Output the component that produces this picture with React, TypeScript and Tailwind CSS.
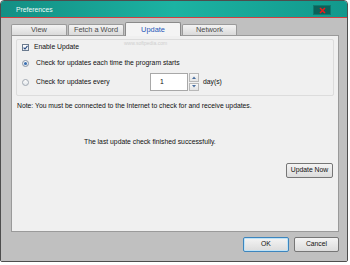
import React from "react";

const font = { fontFamily: '"Liberation Sans", Arial, sans-serif' };

function Tab({ label, selected, w }: { label: string; selected?: boolean; w: string }) {
  if (selected) {
    return (
      <div
        className={`${w} h-[14px] -mb-px z-10 flex items-center justify-center border border-b-0 border-[#8a8a8a] bg-[#f4f4f4] text-[#1f56b8] rounded-t-[2px] text-[7.4px]`}
      >
        {label}
      </div>
    );
  }
  return (
    <div
      className={`${w} h-[11px] flex items-center justify-center border border-b-0 border-[#9a9a9a] bg-gradient-to-b from-[#f3f3f3] to-[#dadada] text-[#4a4a4a] rounded-t-[2px] text-[7.4px]`}
    >
      {label}
    </div>
  );
}

function Button({ label, def, w }: { label: string; def?: boolean; w: string }) {
  return (
    <div
      className={`${w} h-[15px] flex items-center justify-center rounded-[2px] border ${
        def ? "border-[#3d85bd] shadow-[inset_0_0_0_1px_#bfe3f7]" : "border-[#767676]"
      } bg-gradient-to-b from-[#f4f4f4] to-[#dcdcdc] text-[#111]`}
    >
      {label}
    </div>
  );
}

export default function App() {
  return (
    <div className="w-[350px] h-[265px] bg-white relative overflow-hidden" style={font}>
      <div className="w-[348px] h-[262px] flex flex-col border border-[#4d4d4d] rounded-t-[4px] rounded-b-[2px] overflow-hidden text-[6.8px] leading-none shadow-[inset_1px_0_0_#e6e6e6,inset_0_-1px_0_#e6e6e6]">
        {/* Title bar */}
        <div className="h-[17px] shrink-0 flex items-center justify-between border-b border-[#d04040] bg-gradient-to-r from-[#138f84] via-[#1cb3a2] to-[#12988c] pl-[15px] pr-[16px]">
          <span className="text-[#eefaf8] pt-[2px]">Preferences</span>
          <div className="w-[18px] h-[10px] mt-[2px] bg-[#0b6159] border border-[#10796f] flex items-center justify-center">
            <svg width="7" height="7" viewBox="0 0 7 7">
              <path d="M1 1 L6 6 M6 1 L1 6" stroke="#ee1a1a" strokeWidth="1.6" />
            </svg>
          </div>
        </div>
        {/* Frame */}
        <div className="flex-1 flex flex-col bg-[#c0c0c0] pl-[10px] pr-[8px]">
          {/* Tabs */}
          <div className="h-[17px] pt-[4px] flex items-end gap-px">
            <Tab label="View" w="w-[56px]" />
            <Tab label="Fetch a Word" w="w-[56px]" />
            <Tab label="Update" selected w="w-[56px]" />
            <Tab label="Network" w="w-[55px]" />
          </div>
          {/* Panel */}
          <div className="h-[197px] border border-[#9a9a9a] bg-[#f0f0f0] flex flex-col text-[#111]">
            {/* Group box */}
            <div className="ml-[4px] mr-[4px] mt-[3px] h-[57px] border border-[#dcdcdc] rounded-[2px] flex flex-col pl-[5px]">
              <div className="mt-[3px] h-[9px] flex items-center gap-[5px]">
                <div className="w-[7px] h-[7px] border border-[#6b7b8f] bg-gradient-to-b from-[#ffffff] to-[#e6ebf0] flex items-center justify-center">
                  <svg width="5" height="5" viewBox="0 0 5 5">
                    <path d="M0.6 2.6 L2 4 L4.5 0.8" stroke="#24457d" strokeWidth="1.1" fill="none" />
                  </svg>
                </div>
                <span>Enable Update</span>
              </div>
              <div className="mt-[7px] h-[9px] flex items-center gap-[7px]">
                <div className="w-[7px] h-[7px] rounded-full border border-[#8a96a6] bg-gradient-to-b from-[#fdfdfd] to-[#dde3ea] flex items-center justify-center">
                  <div className="w-[3px] h-[3px] rounded-full bg-[#3a6fb0]" />
                </div>
                <span>Check for updates each time the program starts</span>
              </div>
              <div className="mt-[5px] h-[18px] flex items-center">
                <div className="w-[7px] h-[7px] rounded-full border border-[#a0a8b2] bg-gradient-to-b from-[#fdfdfd] to-[#e2e6ea]" />
                <span className="ml-[7px] w-[114px]">Check for updates every</span>
                <div className="w-[38px] h-[18px] border border-[#a8a8a8] bg-white flex items-center pl-[9px]">1</div>
                <div className="w-[10px] h-[18px] flex flex-col gap-px ml-px">
                  <div className="flex-1 border border-[#b8b8b8] bg-gradient-to-b from-[#f8f8f8] to-[#e4e4e4] flex items-center justify-center">
                    <svg width="4" height="3" viewBox="0 0 4 3"><path d="M0 3 L2 0.5 L4 3Z" fill="#4a6fa0" /></svg>
                  </div>
                  <div className="flex-1 border border-[#b8b8b8] bg-gradient-to-b from-[#f8f8f8] to-[#e4e4e4] flex items-center justify-center">
                    <svg width="4" height="3" viewBox="0 0 4 3"><path d="M0 0 L2 2.5 L4 0Z" fill="#4a6fa0" /></svg>
                  </div>
                </div>
                <span className="ml-[4px]">day(s)</span>
              </div>
            </div>
            <div className="mt-[6px] ml-[5px] h-[8px] flex items-center">
              Note: You must be connected to the Internet to check for and receive updates.
            </div>
            <div className="mt-[28px] pl-[72px] h-[8px] flex items-center">
              The last update check finished successfully.
            </div>
            <div className="mt-[17px] self-end mr-[5px]">
              <Button label="Update Now" w="w-[47px]" />
            </div>
          </div>
          {/* Bottom buttons */}
          <div className="mt-[5px] flex justify-end gap-[5px]">
            <Button label="OK" def w="w-[46px]" />
            <Button label="Cancel" w="w-[45px]" />
          </div>
        </div>
      </div>
      {/* watermark */}
      <div className="absolute left-[124px] top-[41px] text-[5px] text-[#cfcfcf] leading-none">www.softpedia.com</div>
    </div>
  );
}
